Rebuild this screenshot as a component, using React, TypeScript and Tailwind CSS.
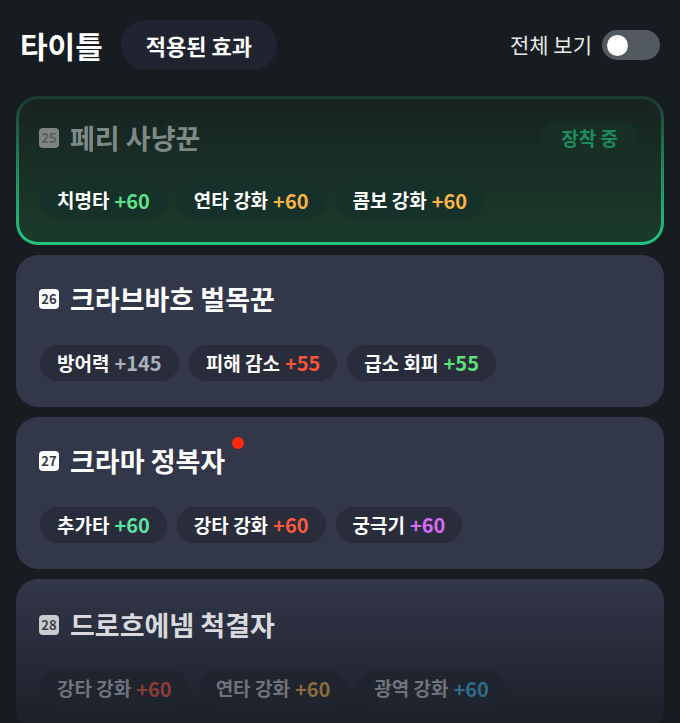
import { ReactNode } from 'react';

interface Stat {
    label: string;
    value: string;
    color: string;
}

interface Title {
    no: number;
    name: string;
    stats: Stat[];
}

const FONT = { fontFamily: '"Noto Sans CJK KR", "Noto Sans", sans-serif' };

function Chip({ stat, className, labelClass }: { stat: Stat; className: string; labelClass: string }) {
    return (
        <div className={`flex h-full items-center rounded-full px-[17px] font-bold ${className}`}>
            <span className={`text-[19px] ${labelClass}`}>{stat.label}</span>
            <span className="ml-[5px] text-[20px]" style={{ color: stat.color }}>
                {stat.value}
            </span>
        </div>
    );
}

function Badge({ no, className }: { no: number; className: string }) {
    return (
        <div className={`flex h-[20px] w-[20px] items-center justify-center rounded-[4px] text-[13px] font-bold ${className}`}>
            {no}
        </div>
    );
}

function Card({
    title,
    extra,
    dot,
}: {
    title: Title;
    extra?: ReactNode;
    dot?: boolean;
}) {
    return (
        <div className="flex h-[152px] flex-col rounded-[22px] bg-[#32374a] px-[23px] pt-[24px]">
            <div className="flex h-10 items-center gap-[11px]">
                <Badge no={title.no} className="bg-white text-[#32374a]" />
                <span className="relative text-[27px] font-bold text-white">
                    {title.name}
                    {dot && (
                        <span className="absolute -top-[4px] -right-[19px] h-[12px] w-[12px] rounded-full bg-[#ff2a0c]" />
                    )}
                </span>
                {extra}
            </div>
            <div className="mt-[26px] flex h-[36px] gap-[10px] pl-px">
                {title.stats.map((s) => (
                    <Chip key={s.label} stat={s} className="bg-[#282c3b]" labelClass="text-white" />
                ))}
            </div>
        </div>
    );
}

const equipped: Title = {
    no: 25,
    name: '페리 사냥꾼',
    stats: [
        { label: '치명타', value: '+60', color: '#5ee38b' },
        { label: '연타 강화', value: '+60', color: '#ffb547' },
        { label: '콤보 강화', value: '+60', color: '#ffb547' },
    ],
};

const titles: Title[] = [
    {
        no: 26,
        name: '크라브바흐 벌목꾼',
        stats: [
            { label: '방어력', value: '+145', color: '#aab0bd' },
            { label: '피해 감소', value: '+55', color: '#ff5536' },
            { label: '급소 회피', value: '+55', color: '#5ee07a' },
        ],
    },
    {
        no: 27,
        name: '크라마 정복자',
        stats: [
            { label: '추가타', value: '+60', color: '#5ee3a0' },
            { label: '강타 강화', value: '+60', color: '#ff5a3c' },
            { label: '궁극기', value: '+60', color: '#d96cff' },
        ],
    },
];

const faded: Title = {
    no: 28,
    name: '드로흐에넴 척결자',
    stats: [
        { label: '강타 강화', value: '+60', color: '#8b3d35' },
        { label: '연타 강화', value: '+60', color: '#8c6b3c' },
        { label: '광역 강화', value: '+60', color: '#2f6c8a' },
    ],
};

export default function App() {
    return (
        <div className="h-[723px] w-[680px] overflow-hidden bg-[#171c20]" style={FONT}>
            {/* HEADER */}
            <div className="flex h-[70px] items-end justify-between px-5">
                <div className="flex h-[50px] items-center gap-[18px]">
                    <span className="text-[30px] font-bold text-white">타이틀</span>
                    <div className="flex h-[50px] items-center rounded-full bg-[#1f2430] px-[25px] text-[22px] font-bold text-white">
                        적용된 효과
                    </div>
                </div>
                <div className="flex h-[50px] items-center gap-[10px]">
                    <span className="text-[21px] text-[#e6e8ea]">전체 보기</span>
                    <div className="flex h-[30px] w-[58px] items-center rounded-full bg-[#525a60] px-[5px]">
                        <div className="h-[21px] w-[21px] rounded-full bg-white" />
                    </div>
                </div>
            </div>

            {/* LIST */}
            <div className="mt-[26px] flex flex-col gap-[10px] px-4">
                {/* equipped */}
                <div className="h-[149px] rounded-[22px] bg-gradient-to-b from-[#1b3a30] via-[#1d8f5c] to-[#22c47f] p-[3px]">
                    <div className="flex h-full flex-col rounded-[19px] bg-gradient-to-b from-[#172321] to-[#1a3b2a] px-[20px] pt-[19px]">
                        <div className="flex h-10 items-center gap-[11px]">
                            <Badge no={equipped.no} className="bg-[#7c8584] text-[#56605f]" />
                            <span className="text-[27px] font-bold text-[#7f8a87]">{equipped.name}</span>
                            <div className="ml-auto mr-[3px] flex h-[35px] items-center rounded-full bg-[#172f25] px-[20px] text-[19px] font-bold text-[#1c8c5c]">
                                장착 중
                            </div>
                        </div>
                        <div className="mt-[24px] flex h-[37px] gap-[10px] pl-[1px]">
                            {equipped.stats.map((s) => (
                                <Chip key={s.label} stat={s} className="bg-[#16302a]" labelClass="text-white" />
                            ))}
                        </div>
                    </div>
                </div>

                {titles.map((t) => (
                    <Card key={t.no} title={t} dot={t.no === 27} />
                ))}

                {/* fading */}
                <div className="flex h-[152px] flex-col rounded-[22px] bg-gradient-to-b from-[#32374a] to-[#1c1f28] px-[23px] pt-[26px]">
                    <div className="flex h-10 items-center gap-[11px]">
                        <Badge no={faded.no} className="bg-[#c9cbcf] text-[#3a3f4c]" />
                        <span className="text-[27px] font-bold text-[#d8dadd]">{faded.name}</span>
                    </div>
                    <div className="mt-[25px] flex h-[37px] gap-[10px] pl-px">
                        {faded.stats.map((s) => (
                            <Chip key={s.label} stat={s} className="bg-[#20242f]" labelClass="text-[#6e737c]" />
                        ))}
                    </div>
                </div>
            </div>
        </div>
    );
}
